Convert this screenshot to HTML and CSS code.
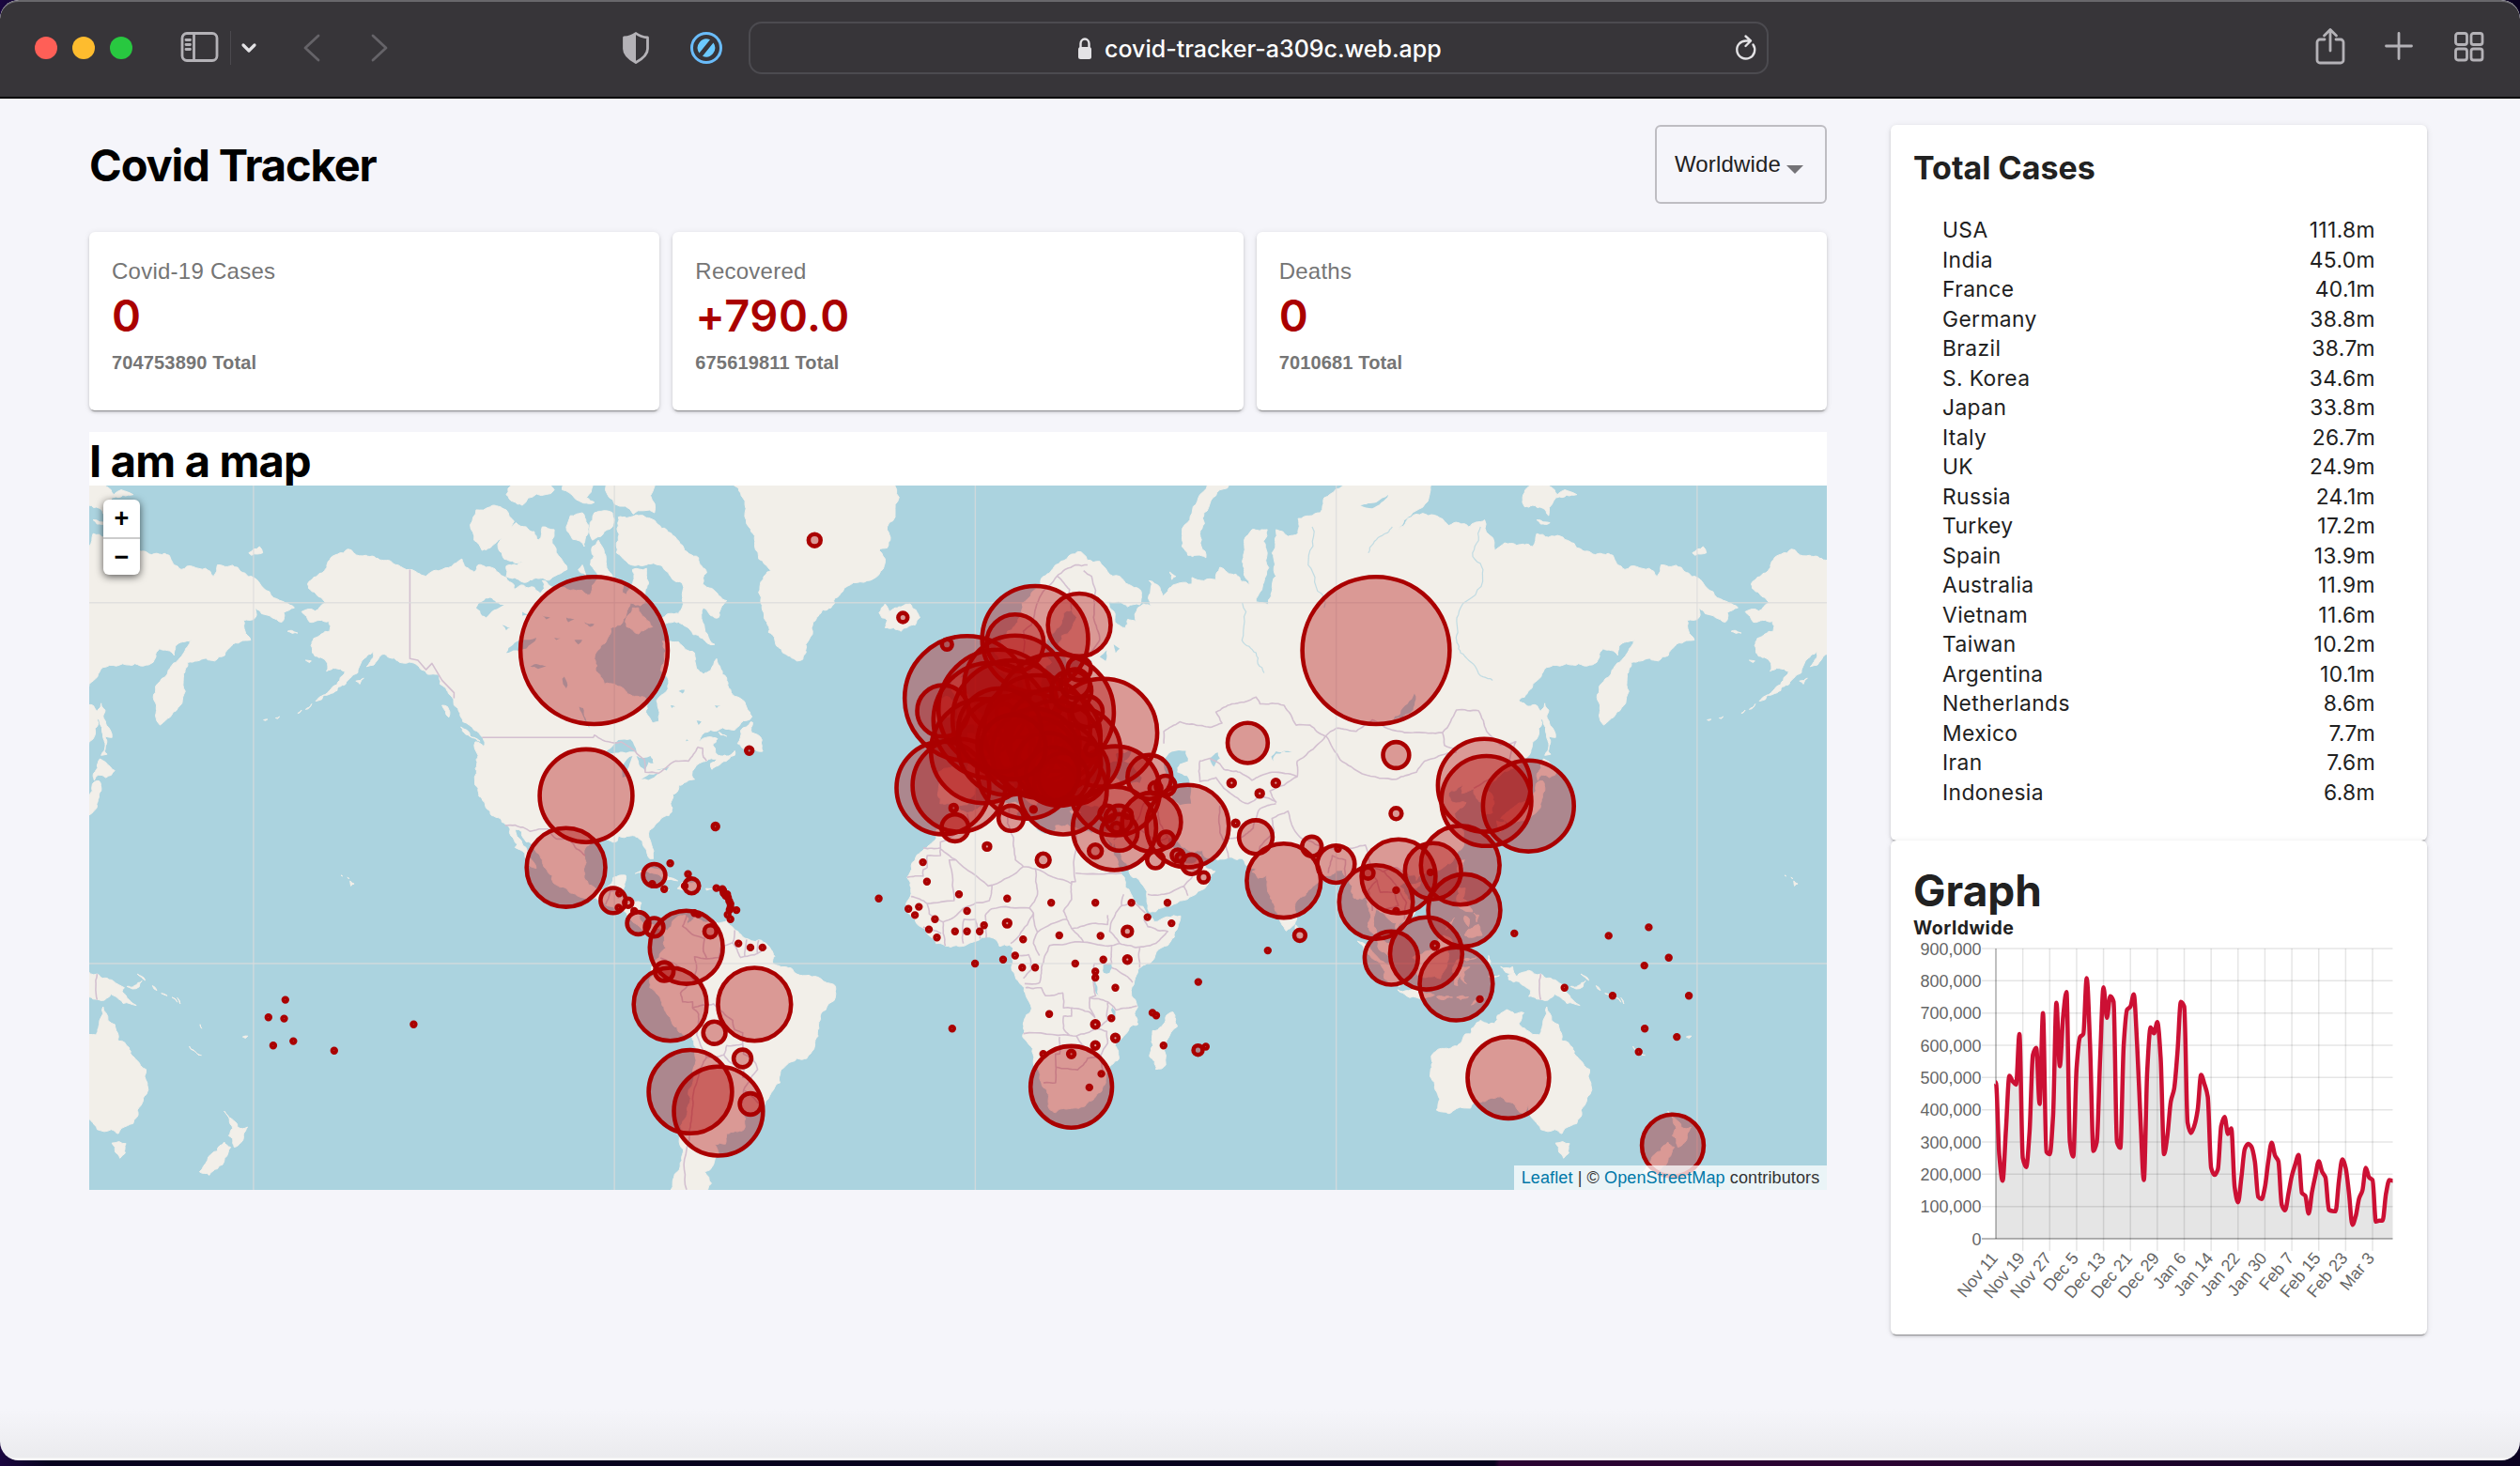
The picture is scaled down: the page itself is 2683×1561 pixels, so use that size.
FILE: index.html
```html
<!DOCTYPE html>
<html lang="en">
<head>
<meta charset="utf-8">
<title>Covid Tracker</title>
<link rel="stylesheet" href="styles.css">
</head>
<body>
<div class="window">
  <header class="toolbar">
    <div class="lights"><i class="light red"></i><i class="light amber"></i><i class="light green"></i></div>
    <svg class="icon sidebar-icon" viewBox="0 0 42 36"><rect x="2" y="2.500" width="37" height="29" rx="5"/><path d="M14.500 3v28M6 9.500h4.500M6 14.500h4.500M6 19.500h4.500"/></svg>
    <i class="divider"></i>
    <svg class="icon bright chevron-icon" viewBox="0 0 18 12"><path d="M3 3l6 6 6-6"/></svg>
    <svg class="icon dim back-icon" viewBox="0 0 18 32"><path d="M16 3L2 16l14 13"/></svg>
    <svg class="icon dim forward-icon" viewBox="0 0 18 32"><path d="M2 3l14 13L2 29"/></svg>
    <svg class="icon shield-icon" viewBox="0 0 30 36"><path d="M15 2.500C11 5.500 7 6.500 2.500 7v12c0 7 6 11 12.500 14.500C21.500 30 27.500 26 27.500 19V7C23 6.500 19 5.500 15 2.500z"/><path class="solid" d="M15 2.500C11 5.500 7 6.500 2.500 7v12c0 7 6 11 12.500 14.500z"/></svg>
    <svg class="icon blocker-icon" viewBox="0 0 36 36"><circle cx="18" cy="18" r="15.500"/><path class="solid" d="M10.500 23.500A9.500 9.500 0 0 1 22 9.300zM25.500 12.500A9.500 9.500 0 0 1 14 26.700z"/></svg>
    <div class="address">
      <svg class="lock-icon" viewBox="0 0 18 26"><path class="shackle" d="M4.500 12V7.500a4.500 5 0 0 1 9 0V12"/><rect x="2" y="11" width="14" height="13" rx="2.500"/></svg>
      <span class="url">covid-tracker-a309c.web.app</span>
      <svg class="icon bright reload-icon" viewBox="0 0 26 30"><path d="M20.500 11.500A9.500 9.500 0 1 1 13 7.500h4M12.500 2.500l5.500 5-5.500 5.500"/></svg>
    </div>
    <svg class="icon share-icon" viewBox="0 0 32 42"><path d="M10 14H5a3 3 0 0 0-3 3v19a3 3 0 0 0 3 3h22a3 3 0 0 0 3-3V17a3 3 0 0 0-3-3h-5M16 26V4M9.500 10L16 3.500 22.500 10"/></svg>
    <svg class="icon plus-icon" viewBox="0 0 30 30"><path d="M15 1.500v27M1.500 15h27"/></svg>
    <svg class="icon grid-icon" viewBox="0 0 34 34"><rect x="2.500" y="2.500" width="12" height="12" rx="2.500"/><rect x="19" y="2.500" width="12" height="12" rx="2.500"/><rect x="2.500" y="19" width="12" height="12" rx="2.500"/><rect x="19" y="19" width="12" height="12" rx="2.500"/></svg>
  </header>

  <main class="app">
    <section class="left">
      <div class="app-header">
        <h1 class="title">Covid Tracker</h1>
        <div class="select"><span>Worldwide</span><i class="caret"></i></div>
      </div>
      <div class="stats">
        <article class="card stat"><p class="stat-label">Covid-19 Cases</p><h2 class="stat-value">0</h2><p class="stat-total">704753890 Total</p></article>
        <article class="card stat"><p class="stat-label">Recovered</p><h2 class="stat-value">+790.0</h2><p class="stat-total">675619811 Total</p></article>
        <article class="card stat"><p class="stat-label">Deaths</p><h2 class="stat-value">0</h2><p class="stat-total">7010681 Total</p></article>
      </div>
      <div class="map-panel">
        <h1 class="title map-title">I am a map</h1>
        <div class="map">
          <svg class="map-canvas" id="map" viewBox="0 0 1850 750" width="1850" height="750"></svg>
          <div class="zoom-control"><b>+</b><b>−</b></div>
          <div class="attribution"><a>Leaflet</a> | © <a>OpenStreetMap</a> contributors</div>
        </div>
      </div>
    </section>

    <aside class="right">
      <div class="card totals">
        <h3 class="totals-title">Total Cases</h3>
        <ul class="table">
          <li><span>USA</span><span>111.8m</span></li>
          <li><span>India</span><span>45.0m</span></li>
          <li><span>France</span><span>40.1m</span></li>
          <li><span>Germany</span><span>38.8m</span></li>
          <li><span>Brazil</span><span>38.7m</span></li>
          <li><span>S. Korea</span><span>34.6m</span></li>
          <li><span>Japan</span><span>33.8m</span></li>
          <li><span>Italy</span><span>26.7m</span></li>
          <li><span>UK</span><span>24.9m</span></li>
          <li><span>Russia</span><span>24.1m</span></li>
          <li><span>Turkey</span><span>17.2m</span></li>
          <li><span>Spain</span><span>13.9m</span></li>
          <li><span>Australia</span><span>11.9m</span></li>
          <li><span>Vietnam</span><span>11.6m</span></li>
          <li><span>Taiwan</span><span>10.2m</span></li>
          <li><span>Argentina</span><span>10.1m</span></li>
          <li><span>Netherlands</span><span>8.6m</span></li>
          <li><span>Mexico</span><span>7.7m</span></li>
          <li><span>Iran</span><span>7.6m</span></li>
          <li><span>Indonesia</span><span>6.8m</span></li>
        </ul>
      </div>
      <div class="card graph">
        <h1 class="graph-title">Graph</h1>
        <h4 class="graph-sub">Worldwide</h4>
        <svg class="chart" id="chart" viewBox="0 0 523 390" width="523" height="390"></svg>
      </div>
    </aside>
  </main>
</div>
<script src="script.js"></script>
</body>
</html>
```

FILE: styles.css
```css
* { box-sizing: border-box; margin: 0; padding: 0; }
body {
  width: 2683px; height: 1561px; overflow: hidden;
  background: linear-gradient(90deg, #1a0640 0, #08031f 2%, #08031f 59.3%, #2b0433 59.5%, #2b0433 75%, #0a0220 100%);
  font-family: Inter, "Liberation Sans", sans-serif;
}
.window {
  height: 1555px; border-radius: 20px; overflow: hidden;
  background: linear-gradient(#f5f5fa 0, #f5f5fa 1500px, #ebebee 1552px, #fafafa 1553px);
}

/* Browser toolbar */
.toolbar {
  height: 105px; display: flex; align-items: center; padding: 0 36px 4px 37px;
  background: #373539; border-top: 2px solid #69686c; border-bottom: 2px solid #000;
  border-radius: 20px 20px 0 0;
}
.toolbar > * { flex: none; }
.lights { display: flex; gap: 16px; width: 104px; }
.light { width: 24px; height: 24px; border-radius: 50%; }
.red { background: #ff5f57; }
.amber { background: #febc2e; }
.green { background: #28c840; }
.icon { fill: none; stroke: #b4b2b7; stroke-width: 2.8; stroke-linecap: round; stroke-linejoin: round; }
.icon .solid { fill: #b4b2b7; stroke: none; }
.icon.bright { stroke: #e3e2e5; }
.icon.dim { stroke: #656368; }
.sidebar-icon { width: 42px; height: 36px; margin-left: 51px; }
.divider { width: 1px; height: 36px; background: #4c4a4f; margin-left: 11px; }
.chevron-icon { width: 18px; height: 12px; margin-left: 10px; stroke-width: 3.2; }
.back-icon { width: 18px; height: 32px; margin-left: 49px; }
.forward-icon { width: 18px; height: 32px; margin-left: 54px; }
.shield-icon { width: 30px; height: 36px; margin-left: 249px; }
.blocker-icon { width: 36px; height: 36px; margin-left: 42px; stroke: #6abcfa; stroke-width: 3; }
.blocker-icon .solid { fill: #6ccaff; }
.address {
  display: flex; align-items: center; width: 1086px; height: 56px; margin-left: 27px;
  border: 2px solid #4c4b50; border-radius: 14px; padding: 0 9px 0 347px;
}
.lock-icon { width: 18px; height: 26px; fill: #e3e2e5; margin-top: 2px; }
.shackle { fill: none; stroke: #e3e2e5; stroke-width: 2.4; }
.url { flex: 1; margin: 2px 0 0 12px; color: #fff; font-size: 25px; letter-spacing: 0; font-weight: 500; }
.reload-icon { width: 26px; height: 30px; stroke-width: 2.4; }
.share-icon { width: 32px; height: 42px; margin-left: 582px; margin-top: -3px; }
.plus-icon { width: 30px; height: 30px; margin-left: 42px; margin-top: -3px; }
.grid-icon { width: 34px; height: 34px; margin-left: 43px; margin-top: -2px; }

/* Page */
.app { display: flex; justify-content: space-between; padding: 28px 99px 0 95px; }
.left { width: 1850px; }
.right { width: 571px; }
.card {
  background: #fff; border-radius: 6px;
  box-shadow: 0 3px 1px -2px rgba(0,0,0,.3), 0 2px 3px rgba(0,0,0,.14), 0 1px 6px rgba(0,0,0,.1);
}
.app-header { display: flex; justify-content: space-between; align-items: center; height: 84px; margin-bottom: 30px; }
.title { font-size: 47px; line-height: 56px; font-weight: 700; letter-spacing: -1.1px; color: #000; padding-top: 2px; }
.select {
  width: 183px; height: 84px; border: 2px solid #bebdc2; border-radius: 6px;
  display: flex; align-items: center; padding: 0 23px 0 19px; justify-content: space-between;
  font: 24px "Liberation Sans", sans-serif; color: #212121; letter-spacing: .15px;
}
.caret { border: 9px solid transparent; border-top-color: #747377; border-bottom: 0; margin-top: 11px; }
.stats { display: grid; grid-template-columns: repeat(3, 1fr); gap: 14px; height: 190px; margin-bottom: 23px; }
.stat { padding: 25px 24px; }
.stat-label { font: 24px/34px "Liberation Sans", sans-serif; letter-spacing: .25px; color: #757575; }
.stat-value { font-size: 47px; line-height: 56px; font-weight: 600; letter-spacing: .5px; color: #aa0000; margin-top: 2px; }
.stat-total { font: bold 20px/28px "Liberation Sans", sans-serif; letter-spacing: .15px; color: #757575; margin-top: 8px; }
.map-panel { background: #fff; height: 807px; }
.map-title { height: 57px; padding-top: 3px; letter-spacing: -.8px; }
.map { position: relative; width: 1850px; height: 750px; overflow: hidden; background: #abd3df; }
.map-canvas { display: block; }
.land { fill: #f2efe9; stroke: #f2efe9; stroke-width: 1; stroke-linejoin: round; }
.water { fill: #abd3df; }
.river { fill: none; stroke: #abd3df; stroke-width: 1.2; opacity: .7; }
.border { fill: none; stroke: #d3c0d0; stroke-width: 1.6; stroke-linejoin: round; }
.tile { stroke: #dcdcdc; stroke-width: 1.4; opacity: .75; }
.case { fill: #ae0000; fill-opacity: .36; stroke: #aa0000; stroke-width: 4.6; }
.zoom-control {
  position: absolute; left: 15px; top: 15px; width: 39px; background: #fff; border-radius: 6px;
  box-shadow: 0 2px 8px rgba(0,0,0,.65);
}
.zoom-control b { display: block; height: 40px; text-align: center; font: bold 27px/41px "Liberation Sans", sans-serif; color: #000; }
.zoom-control b + b { border-top: 2px solid #ccc; line-height: 39px; }
.attribution {
  position: absolute; right: 0; bottom: 0; height: 26px; width: 333px; text-align: center;
  background: rgba(255,255,255,.75); font: 18px/27px "Liberation Sans", sans-serif; letter-spacing: .12px; color: #333;
}
.attribution a { color: #0078a8; }

.totals { height: 762px; padding: 25px 55px 0 24px; }
.totals-title { font-size: 34px; line-height: 42px; font-weight: 700; color: #212121; }
.table { list-style: none; margin: 29px 0 0 31px; color: #212121; font-size: 22.8px; letter-spacing: .4px; }
.table li { display: flex; justify-content: space-between; height: 31.5px; line-height: 31.5px; }
.graph { height: 526px; padding: 25px 24px 0; }
.graph-title { font-size: 46px; line-height: 56px; color: #212121; }
.graph-sub { font-size: 19.5px; line-height: 25px; color: #212121; letter-spacing: .5px; }
.chart { display: block; }
.grid { stroke: rgba(0,0,0,.1); stroke-width: 1.5; }
.axis { stroke: rgba(0,0,0,.28); stroke-width: 1.8; }
.area { fill: rgba(0,0,0,.1); }
.series { fill: none; stroke: #cc1034; stroke-width: 4.5; stroke-linejoin: round; }
.tick { font: 18px "Liberation Sans", sans-serif; fill: #666; text-anchor: end; }
```

FILE: script.js
```js
const NS = 'http://www.w3.org/2000/svg';
function add(parent, tag, attrs, text) {
  const el = document.createElementNS(NS, tag);
  for (const key in attrs) el.setAttribute(key, attrs[key]);
  if (text !== undefined) el.textContent = text;
  parent.appendChild(el);
  return el;
}

/* Map: Web Mercator */
const WORLD = 1537, X0 = 943.4, Y0 = 509, K = WORLD / (2 * Math.PI), RAD = Math.PI / 180;
const px = lon => X0 + lon * WORLD / 360;
const py = lat => Y0 - K * Math.log(Math.tan(Math.PI / 4 + lat * RAD / 2));

const land = [
  // Americas
  '-156.5,71.3 -155,71 -152,70.8 -148,70.4 -144,70 -141,69.6 -137,69 -135,69.5 -133,69.6 -130,70.1 -128,70.5 -127,69.8 -125,69.4 -124,70 -122,69.8 -117,68.9 -115,68.2 -115,67.8 -110,68 -108.5,67.4 -107.5,67.9 -108,68.6 -104,68 -101,67.7 -98,67.7 -96,67.3 -95.5,68.2 -94,69 -96,70 -95.5,71.5 -94,72 -92.5,71 -92,70 -91.5,69.5 -90,68.8 -88,68.5 -88,67.5 -87,67.3 -86,68 -85.5,69.6 -82,69.7 -81.5,68.5 -82,67 -83.5,66.2 -86,66.5 -87,65.4 -88.5,64.2 -91,63.8 -93,62 -94.7,60 -94.7,58.8 -92.5,57 -90,57 -88,56.5 -85,55.3 -82.3,55.1 -82.2,53 -80.5,51.3 -79,51.5 -78.8,53 -79.5,54.7 -77,56 -76.5,57.5 -78.5,58.8 -77.5,60 -78,62.4 -74,62.3 -70,61 -69.5,59 -67.8,58.3 -66,58.8 -64.5,60.3 -63.5,59 -62,57.8 -61.5,56.5 -60,55.3 -57.5,54.5 -57,53.7 -55.7,52.3 -58.5,51.3 -60,50.2 -66,50.2 -68.5,49 -70,47 -69,48.1 -66.5,49.1 -64.3,48.8 -65.5,47.8 -64.8,46.5 -63.5,45.9 -61.5,45.9 -60,46.8 -60,46 -63.5,44.5 -65.7,43.5 -66,44.6 -64.5,45.4 -67,45 -70,43.7 -70.7,42.5 -70,41.7 -72,41.2 -74,40.6 -74.8,39 -75.5,38.8 -76,37 -75.7,35.3 -77.5,34.4 -79.5,33 -81.3,31.5 -81.4,30 -80.2,27 -80.3,25.3 -81.2,25.3 -81.8,26.3 -82.7,28 -83,29.2 -84.2,30 -86,30.3 -89,30.3 -89.3,29.2 -91.5,29.4 -94,29.6 -97,28 -97.5,26 -97.7,22.8 -96.3,19.2 -94.5,18.2 -92,18.6 -90.6,19.7 -90.3,21 -87.2,21.5 -87.5,19.5 -88.3,17.5 -88.8,15.9 -86,15.9 -83.3,15 -83.6,12.5 -83.7,11 -82,9 -79.8,9.5 -77.5,8.6 -76.8,8.2 -75.5,10.6 -74.8,11.1 -72.3,12 -71.5,11.2 -71.8,9.5 -71,10.4 -70,12 -68.3,10.7 -66,10.5 -62,10.7 -60.8,9.3 -60,8.4 -58.5,7.3 -57.5,6.3 -54,5.9 -51.8,4.6 -51,3.5 -50,1.8 -50.5,0 -48.5,-0.8 -46,-1.1 -44.5,-2.6 -41.5,-2.9 -38.5,-3.8 -37,-4.8 -35.3,-5.2 -34.8,-7.5 -35.2,-9.2 -37.3,-11.5 -38.7,-13 -39,-16 -39.2,-17.8 -40,-20 -40.8,-21.5 -42,-23 -44.5,-23 -47,-24.5 -48.6,-26 -48.7,-28.5 -50.3,-30 -52.3,-32.5 -53.7,-34.2 -55,-34.9 -58,-34.2 -57.3,-36 -57.7,-38.2 -62,-39 -62.3,-41 -65,-41 -64,-42.7 -65.3,-44.8 -67.5,-46 -65.8,-48 -67.5,-50 -69,-52 -74.5,-52 -75.5,-48 -74.3,-46 -73.2,-44 -72.8,-42 -73.8,-40 -73.5,-37.5 -71.7,-33.5 -71.5,-30 -70.5,-26 -70.2,-19 -71.5,-17.5 -75.5,-15 -77.2,-12 -79.5,-7.5 -81.2,-6 -81.3,-4.5 -80,-3 -80.8,-2 -80,0.2 -78.8,1.5 -77.2,3.8 -77.5,6.5 -78.2,8 -79.5,8.9 -80.3,8 -81.8,7.8 -83,8.3 -84.8,9.9 -85.8,10.8 -87.6,13 -90,13.8 -92.3,14.6 -94.7,16.2 -97,15.9 -101.5,17.8 -105.3,19.8 -105.5,21.5 -108,25 -109.5,26.7 -112,29 -113.1,31.2 -114.8,31.7 -114.3,30.2 -112.8,28.2 -111.3,26 -110,24.3 -109.5,23.1 -110.3,23.3 -112,25 -112.3,26.5 -114.8,27.8 -114.2,28.5 -115.8,30.3 -117.2,32.8 -118.5,34 -120.6,34.6 -122.4,37.3 -124,40 -124.4,42.8 -124,46 -124.7,48.3 -122.5,47.5 -122.8,49 -125,50.2 -127.8,51.5 -128.5,52.8 -130,54 -131,55.5 -133.5,57 -134,58.3 -136.5,58.3 -139.5,59.6 -144,60 -148,60.8 -150,59.5 -151.8,59.3 -150,61.2 -153,60 -154,58.5 -157,57 -160,55.8 -164.5,54.6 -162,55.6 -158.5,57.5 -157.2,58.7 -161.8,58.7 -162,60 -165.3,61 -165,62.7 -161,63.5 -161.2,64.6 -166,64.5 -168,65.6 -162,66.5 -163.8,67.1 -166.5,68.3 -163,69.3 -161,70.4 -159,70.9',
  '-117,69 -113,68.5 -109,68.8 -105,69 -101.8,69.6 -104,70.8 -105,72.8 -108,73 -109,72 -112,73 -114.5,73.3 -118,72.4 -119,71.4 -117.5,70.5 -112,70.4 -117,69.9',
  '-125,72 -123,71.2 -121,71.4 -119,72 -115,73.4 -117,74.2 -121,74.4 -124.5,74.2',
  '-97,69 -95.5,68.8 -99,69.6 -98,70',
  '-102,73 -97.5,71.5 -96.5,73 -98,74 -101,73.8', '-95.5,72 -90.5,73 -90.5,74 -95,74',
  '-89,73.7 -85,73.8 -81,73.6 -77,72.8 -73,71.6 -69,70.6 -67,69.3 -68,68.3 -64,67.2 -62,66.7 -64,65 -66,65.2 -67.8,66 -68,64.5 -65,62 -68,62.7 -72,64 -74,64.5 -78,64.3 -78,65 -74,65.4 -73,67 -73,68.3 -76,69 -79,70 -84,70 -87,70.3 -89.5,71 -89,72',
  '-87,64 -85.5,66 -84,66 -80.5,64 -84,63.2', '-80,74 -90,74.6 -92,76.5 -80,76.2', '-93,76.4 -97,75 -95,74.7 -100,75 -103,75.5 -101,76.8 -96,77', '-105,75.5 -113,74.5 -117,75.2 -114,76.6 -108,76.8', '-117,76.1 -123,76.1 -120,77 -116,77',
  '-59.3,48 -56,51.5 -55.5,51.4 -55.8,49.8 -53.2,48.6 -53,46.7 -55.5,47', '-64,49.9 -62,49.2 -63.5,49.4', '-128.3,50.7 -125,49 -123.5,48.4 -126,49.2', '-133,54 -131.6,53.8 -131.3,52.2', '-154.5,57.4 -152.5,57.8 -153.5,57', '-167,53.4 -165.5,54.2 -166,53.7', '-169,52.8 -168,53.3 -168.5,52.9', '-174.5,52.1 -173.5,52.3 -174,52', '-177.5,51.8 -176.5,51.9 -177,51.7', '-170.5,63.6 -169,63.3 -171.5,63.5', '-167,60.1 -165.6,60 -166,59.8',
  '-84.8,21.9 -82.5,23.1 -80,23 -77,21.5 -74.2,20.2 -77.6,19.9 -78.5,21.3 -82,22.5', '-74.3,18.4 -73,19.9 -70,19.8 -68.4,18.6 -71,17.8 -72.5,18.2', '-78.3,18.4 -76.3,18.1 -77.5,17.8', '-67.2,18.4 -65.7,18.3 -67,18', '-155.9,20.2 -154.9,19.5 -155.7,19', '-156.6,21 -156.1,20.7', '-158.2,21.5 -157.8,21.3', '-58,-51.3 -61,-52',
  // Greenland, Iceland, Britain, Arctic
  '-73,78.5 -69,76 -66,76 -61,76 -58,75 -56.5,73 -55,71.5 -54,70.5 -51,69.5 -53.5,68.5 -53.5,66.5 -52,64.5 -50,62.5 -48,61 -44.5,60 -43,60.2 -42.3,62 -40.5,64.5 -38,65.8 -36,66 -33,67.6 -27,68.6 -22.5,70.2 -24,71.2 -22,71.4 -22,73 -20,74 -20,76 -18,78.5',
  '-24,65.5 -22.5,66.4 -21.5,65.6 -20,66 -16.3,66.4 -13.8,65 -15,64.2 -18.5,63.5 -22.5,63.9 -22,64.7',
  '-5.5,50.1 -3,50.7 1,51 1.6,52.7 0,53.3 -1.5,55 -3,56 -2,57.6 -4,57.8 -3.2,58.6 -5,58.5 -6,56.5 -4.8,54.8 -3,54 -4.5,53.2 -4.5,52.2 -5,51.7 -3,51.4', '-10,51.7 -6.3,52.2 -5.6,54.6 -7.5,55.3 -10,54.2',
  '51.5,71.5 53,70.8 57.5,70.6 56,72.5 57,74 61,75.5 67,76.5 68,76.9 63,76.4 56,75.2 53.5,73.5', '48.5,69.4 50,69 49,68.7', '94,80 100,79 105,78.5 103,77.7 97,78', '137.5,75.6 140,75.9 143,75.8 145,75 150,75.2 147,75.5 143,73.8 139,74.5 137,74.4', '140,73.5 143.3,73.3 141,73.2', '178.8,71 181.5,71.5 182.3,71 179.5,70.8',
  // Eurasia
  '25.5,71.1 31,70.3 33,69.4 36,69 41,67.8 41,66.3 38,66.1 33,66.6 34.8,64.5 37.5,63.9 38,64.8 40,64.6 40.5,66 42,66.4 44,66.1 44,68.3 43.3,68.6 46,68 46.5,66.8 48,67.6 51,68.4 54,68.3 54,68.9 57,68.6 60,68.7 61,69.8 65,69.2 68.5,68.2 67,69.5 67,71 69,72.8 72.8,72.8 72.8,71 72,68.5 70,66.6 73,66.3 74,68 75,69 74,71 75,72.8 78,72.3 80.5,72.5 80.5,73.6 86,74 87,75 93,76 98,76.2 104,77.6 112,76.5 113.5,75.5 109,74 105.5,72.8 110,73.9 113,73.8 118,73.1 123,73 127,73.5 129.5,71.2 132,71.8 135,71.6 139,71.5 140,72.5 146,72.3 150,71.4 154,70.9 159,70.8 162,69.6 168,69.7 170,69 171,70 176,69.8 180,68.9 185,67 188,66.5 190.2,66 187.5,65.5 187,64.5 182,65.4 180.5,66 180.5,65 177.5,64.7 179.3,62.5 174.5,61.8 170.3,60 166,60 163.5,59.8 162.5,57.8 163,56 160,53 158,51.7 156.7,51 155.8,54 156,57 158.5,58.3 161,60 163.5,61.7 164.5,62.5 160.5,61.8 160.2,60.7 156.5,61.5 154.5,59.7 149,59.5 142.5,59.2 139,57 137,55.2 135.5,54.7 139.5,54.1 141.3,53 140.5,49.5 138.5,46.5 136,44.5 132,43.2 129.8,41.5 127.5,39.8 129.4,37 129,35.2 126.5,34.5 126.5,37.2 125,38 124.5,40 121.3,39 121.5,40.8 118,39 119,37.3 122.4,37.2 119.5,35 121,32.5 121.8,31 121.8,29 119.7,26 117,23.5 113.5,22.2 110.5,21.2 110,20.3 109.6,21.6 107.8,21.5 105.8,19 108.8,15.5 109.3,12 107,10.4 104.8,8.7 105,10.2 103,11 101,12.7 100,13.4 99.3,11 99.3,9.3 100.5,7.3 103.2,5 103.5,2.5 104,1.4 101.3,3 100.3,5.8 98.3,8.2 98.6,12 97.6,16.3 95.3,15.8 94.3,16.2 94,19 92,21.5 91.5,22.7 89,21.7 87,21.3 85,19.5 82.3,16.7 80.2,15.5 80,12.5 79.8,10.3 78,8.5 77.5,8.1 76.3,10 74.8,13 73.3,17 72.8,20 72.6,21.5 70.5,20.8 69,22.3 70,23 67.5,23.8 66.6,25.3 61.6,25.2 57.2,25.7 56.7,27.1 54,26.6 51.5,27.9 50,30.1 48,30 48.5,28.3 50.2,26.5 51,24.6 51.3,26 51.6,24.5 54,24.1 56.2,26.2 56.6,24.5 59.8,22.4 57.7,19 55,17 52,15.6 45,12.8 43.4,12.7 42.8,16 39.2,21 37.2,24.5 35,28 34.8,29.5 34.3,31.2 35.2,33 36,36 36.1,36.8 34,36.3 32.3,36.1 30.5,36.6 27.5,36.8 26.3,38.5 26.2,39.5 27,40.4 29,41 26,40.8 23.8,40.5 22.8,40.3 23.8,39 24,37.8 22.8,36.6 21.7,37 20,39.5 19.4,41.5 16.5,43.3 14,45 13.7,45.6 12.4,45.2 12.5,44 14,42.5 16,41.5 18.4,40 17,40.5 17,39 16,38 15.7,40 13,41.2 10.5,42.9 8.8,44.4 6,43.1 3.2,43.3 3.2,42 0.5,40.7 -0.2,38.8 -2,36.8 -5.5,36.1 -6.5,37 -8.8,37 -9.4,38.8 -8.8,41.5 -9.2,43 -7.8,43.7 -1.8,43.4 -1.2,45.8 -2.5,47.3 -4.7,48.1 -1.5,48.7 -1.8,49.7 0.2,49.5 1.6,50.8 4,51.8 5,53.3 8.5,53.8 8.2,56 8.3,57 10.5,57.7 10.3,56 9.8,54.8 11,54 14,54 18.5,54.7 21,55.2 21.3,57.3 23.5,57.1 24.3,58.2 23.5,59.2 28,59.5 30,60 25,60.2 22.8,59.9 21.3,61 21.5,63 25.3,65 24,65.8 22,65.4 21,64 17.3,61.5 17.3,60.7 19,59.8 16.5,57.5 16,56.3 14.3,55.5 12.8,55.6 11.2,58.9 10.5,59.5 8,58 5.5,59 5,61.5 8,63.5 11,65 14,67.5 17,69 20,70',
  // Africa
  '-6,35.8 -2,35.1 3,36.8 10,37.3 11,36.8 10.2,34.3 15,32.4 19,30.3 20,32.5 23,32.7 29,30.9 32.5,31.2 34.3,31.3 34.8,29.5 34.3,28 32.6,29.9 33.5,28 35.5,24 37.2,21 37.4,18.8 39.5,15.5 43.2,11.8 44.5,10.4 51.2,11.8 50.5,9 48,4.5 43.5,0 40.2,-2.8 39,-6 40.5,-10.8 40.6,-15 37,-17.8 34.8,-20 35.5,-23.5 32.8,-26 32.5,-28.5 30,-31.5 27,-33.6 22,-34 20,-34.8 18.4,-34 18.2,-32 16.5,-28.6 14.8,-25 14.4,-22 11.8,-18 12,-16 13.7,-12 13,-8.8 12.2,-6 9,-1 9.5,3.8 8.5,4.6 6,4.3 4.5,6.3 1,5.9 -2,4.8 -7.5,4.4 -11.3,6.8 -13.3,9 -15,11 -16.8,12.5 -17.3,14.7 -16.2,16.5 -16.3,19.2 -17,21 -16,23.7 -14.5,26.2 -11.5,28.3 -9.7,29.7 -9.8,31.5 -6.8,34.1',
  '49.3,-12 50.4,-15.5 49.6,-16 47.5,-24.5 45,-25.5 43.4,-22.5 44.3,-20 44.2,-16.5 46.5,-15.5',
  // Mediterranean islands
  '12.5,38 15.6,38.2 15.1,36.7', '8.2,40.8 9.7,40.8 9.4,39.2 8.4,39', '8.7,42.4 9.4,43 9.3,41.5', '23.6,35.5 26.3,35.2 24,35', '32.4,34.9 34.5,35.6 33,34.6', '2.4,39.5 3.4,39.7 3,39.3',
  // Asia and Oceania islands
  '142,54.3 143,53.3 143.3,51 144.7,49 143,49.2 142.8,46.8 143.5,46.2 142,46 142.2,50', '140,42.3 141.7,45.4 144.3,44 145.4,43.3 143.2,42 141.2,42.5 140.3,41.5', '141.5,41.4 142,39.5 140.8,36 139,34.7 135.8,33.5 131,34 133,35.5 136.7,37.3 139.8,39.5 140.3,41.2', '130,33.5 132,33.4 131,31.2 130.2,31.4', '132.3,33.8 134.6,34.2 133,32.8', '121,25 122,25 120.8,22 120.1,23', '108.7,19.3 111,19.9 110,18.4', '79.9,9.6 81.8,7.5 81,6 79.8,7',
  '95.3,5.6 98,4.5 103.5,-0.5 106,-3.2 105.8,-5.8 102,-3.8 98.7,1.5', '105.3,-6.5 108,-6.7 111,-6.4 114.5,-7.8 113,-8.3 107,-7.6', '109,1.5 109.7,2 113,3.2 116.8,7 119,5.2 117.7,3 118,1 116,-3.8 113,-3.3 110.2,-2.8', '119.3,-3 120,0.8 125,1.5 121,0.5 121,-1 123.3,-0.8 121.8,-2 122.5,-5 121,-3 120.3,-5.5 119.5,-5.3', '120,16 120.5,18.5 122.2,18.5 121.5,16 124,12.8 120.7,13.8', '122,7 123.5,8.6 125.5,9.7 126.4,7 124,6.5', '122,11.8 123.2,11 123,9.2 122,10.5', '124.3,12.5 125.6,12 125,10.3', '117.3,8.4 119.5,11.3 118.5,9.3', '115,-8.3 117,-8.3 119,-8.4 116.5,-9', '120,-8.4 123,-8.3 121,-9', '123.7,-10.3 127,-8.4 125,-9.4', '127.7,0 128,2 128.5,0.5 128,-0.8', '128,-3.2 130.7,-3 129,-3.5',
  '131,-0.8 134,-0.8 135,-3.3 138,-1.7 141,-2.6 145,-4.3 147.8,-6 147.2,-7 149,-9 150.8,-10.4 147.5,-9.9 144.5,-7.6 142,-9.2 138,-8.2 138.5,-6.8 135.5,-4.5 133,-4 132.8,-3 134,-2.6 132.3,-2.2', '148.4,-5.7 150.3,-5.5 152.2,-4.3 151.5,-5.8 149.8,-6.3', '151,-2.6 153,-4.2 152,-3.4', '154.8,-5.5 155.9,-6.7', '157,-7.4 158.5,-8', '159.7,-8.4 161,-9.6', '161,-8.5 161.7,-10', '164,-20.2 167,-22.3 166.2,-22.2', '177.3,-18 178.6,-17.8 178,-18.3', '166.7,-15 167.1,-16',
  '113.7,-22.5 114.2,-21.8 117,-20.7 121,-19.5 122.2,-17.3 123.5,-17.3 123.7,-16 125,-14.6 126,-14 128,-15 129.5,-14.8 130.2,-12.8 131,-12.3 132.5,-11.4 136.8,-12.2 135.5,-14.8 137,-15.9 139,-17.4 140.8,-17.5 141.6,-14 142.5,-10.7 143.7,-14 145.4,-15 146.3,-19 149,-20.5 151,-23.5 153.2,-25.5 153.5,-28.5 152.5,-32.3 151,-34.3 150,-37 147,-38 146.3,-39 144.5,-38.2 141,-38.2 139.5,-36.5 138.5,-35.6 138,-34.3 137.8,-32.7 137,-35 135.8,-34.8 134,-32.8 131,-31.5 128,-32 124,-33 123.5,-33.9 120,-34 118,-35 115,-34.3 115.8,-32 114,-28 113.5,-26 114,-24',
  '144.7,-40.8 148.2,-40.9 148,-42.7 146.7,-43.6 145.5,-42.5', '172.7,-34.5 174.5,-36 176,-37.7 178.5,-37.7 177.5,-39.3 176.5,-41 175.2,-41.6 174.8,-40 173.8,-39.4 174.8,-38 174,-36.2', '172.7,-40.6 174.3,-41.6 172.8,-43.6 171,-45.5 169,-46.6 166.5,-46 168.5,-44 171,-42.3'
];
const water = [
  '28,42 28.7,43.8 31,46.5 33,46 33.5,44.6 35.4,45 35,46.2 38.5,47.2 39,46.8 37,45 39.8,43.5 41.5,42 41,41 38,41 35,42 32,41.7 29.2,41.2',
  '47,45 49,46.6 52.5,46.8 53,45 51,44.5 50.3,43 52.8,42.3 53.8,39.5 53.8,37 51,36.7 49,37.8 49.5,40.3 47.5,43',
  '58.5,45.5 60.5,46.5 61,45.5 59.5,44', '73.8,45.8 75,46.7 79,46.7 75,46.3 74.3,45', '103.8,51.6 106,52.7 109.5,55.7 109.5,54 106.5,52.1', '32,0 34,0.3 33.5,-2.3 32,-2.3', '29.3,-3.5 31,-8.3 29.8,-6', '34,-10 35,-14 34.5,-13',
  '-92,46.7 -89,48.6 -86,48.7 -84.5,46.6 -88,46.6', '-88,42 -87.7,44.5 -85.5,45.9 -86.4,44 -86.5,42.3', '-84.5,45.9 -81,45.9 -80.3,44.6 -81.5,44.8 -82.3,43.2 -83.5,44', '-83.3,41.7 -79,42.8 -81.5,41.6', '-79.6,43.4 -76.3,44 -77,43.3', '-98.8,53.8 -97.8,53.6 -96.3,50.5 -97.5,52', '-124.5,66 -121,67 -117.5,66.3 -120,65.8 -122,65 -123,65.2', '-117,61 -113,62.5 -109.5,62.8 -112,61.5', '-111,59.3 -107,59.4 -109,59', '-103,57.7 -102,56.4 -102.5,58', '-100,62.5 -98,62.5 -99,62', '-97.5,64.5 -95,64.3 -96,64', '31,60.5 32.8,61.3 32.5,60', '34.5,62 36,61.5 35,61', '13,58.8 14,59 13.2,58.4', '96,74.5 100,74.7 103,75.2 99,74.3',
  '-118,64.2 -116,63.9 -117,63.6', '-108,65.2 -106,65 -107,64.8', '-102,65 -100,64.8 -101.5,64.5', '-113,65.6 -111.5,65.3 -113,65.2', '-105,62.8 -103.5,62.7 -104.5,62.5', '-74,56 -72.5,56.2 -73,55.7', '-76,54 -74.8,53.8 -75.7,53.6', '-65,54 -63.5,54 -64.5,53.6', '-69.5,51.7 -68.3,51.5 -69,51', '-72,48.7 -71.5,48.5 -72.2,48.4'
];
const rivers = ['126,73 124,71 126.5,69 121,66 120,63 121,61 125,59 129,57.5', '72,58.5 70,61 66.5,62.5 66.6,66.5', '84,73 83,70 87,67 87,66', '104,73 101,72.3 98,71'];
const borders = [
  '-141,69.6 -141,60.3 -139,60.1 -137,58.9 -135.5,59.7 -133,57.5 -130,55.8 -130,55', '-123,49 -95.2,49', '-95.2,49 -95,49.4 -93,48.6 -90,48.1 -88.4,48.3 -84.8,46.7 -82.5,45.3 -82.3,43 -79,42.8 -76.5,44.2 -74.8,45 -71.5,45 -70.3,46.2 -69.2,47.4 -68,47.2 -67.8,45.7 -67,45',
  '-117.2,32.5 -114.8,32.6 -111,31.3 -108,31.8 -106.5,31.8 -104.5,29.7 -102.5,29.7 -101,29.2 -99.5,27.5 -97.3,26',
  '-92.2,14.6 -91.5,16 -91,17.8 -89.2,17.8 -89,16', '-72,11.8 -73,9.3 -70,7 -67.5,6.2 -67.8,3 -67,1.2 -70,1.7 -69.5,-1 -70,-4.2 -73.5,-7.3 -73,-9.5 -70.5,-9.5 -70.5,-11 -69,-12.5 -69.5,-17.5 -68.5,-20 -67,-22.8 -69,-27 -70.5,-32 -71,-37 -72,-42 -72,-49',
  '-70,-4.2 -75,0 -78.5,1.4', '-67,1.2 -64,1.5 -63.5,4 -60.5,5.2 -60,8.3', '-60.5,5.2 -58.5,1.5 -55,2.2 -51.8,4', '-57,6 -57.5,2', '-54,5.8 -54.3,2.3', '-70.5,-11 -65.3,-10 -60.5,-14 -60,-16.3 -58,-17 -57.8,-22 -55.5,-23 -54.3,-25.5 -56,-27.5 -57.8,-30.2 -58.2,-33', '-67,-22.8 -62.7,-22.2 -61,-24 -57.7,-25.5 -58,-27.3 -56,-27.5', '-62.7,-22.2 -62,-20 -58,-19.7 -57.8,-22', '-57.5,-30.2 -53.5,-33.5',
  '-8.7,27.7 -8.7,29 -3,32 -1.5,32.2 -2,35', '-13,27.7 -8.7,27.7 -8.7,26 -12,26 -12,23.3 -13,22.8 -13,21.3 -17,21', '-8.7,27.5 -4.8,25 3.2,19 4.2,19.2 12,23.5 15,23 24,19.5 24,20 25,20 25,31.5', '25,22 36.5,22', '12,23.5 10,25 9.5,30 8,33 8.5,36.8', '-4.8,25 -6.5,25 -5.3,15.5 -12,14.8 -16,16.5', '4.2,19.2 3.5,15.5 0.2,15 -3,13.7 -5.3,11.5 -8,10.3 -11.5,12.3 -12,14.8', '15,23 15.5,17 13.5,13.7 4,13.5 2.5,12 2.7,6.4', '13.5,13.7 14.5,12.5 11,7 8.8,5', '24,19.5 24,15.8 22,13 22.8,11 15.5,7.8 14.5,12.5', '22.8,11 24,8.7 27,5.3 34,4.5 36,5 33.5,8 34,10.5 36.5,14.3 37,17', '24,8.7 30,10 33,9.7 33,12', '36.5,14.3 40,14.7 42.4,12.5', '36,5 40,4 42,4.2 45,5 48,8 43,9.2 42,11', '41,4 41,-1', '34,4.5 34,0 29.7,0 29.5,-4.5 30,-8 28.5,-8.5', '34,-1 37.5,-3 39.2,-4.7', '27,5.3 18.5,4.5 16.5,-1 16,-4.8 12.3,-5', '11,2 13.3,2.2 14,-1.5 12,-3.7', '15.5,7.8 14.5,5 16,2', '12.5,-6 16.5,-6 17.5,-8 21.8,-7.3 22,-11 24,-11 24,-13 22,-13 22,-16 23.5,-17.6 12,-17.2', '24,-11 28.5,-12 29.8,-13.3 28.5,-11 28.5,-8.5 33,-9.5 33,-14 30,-16 25.2,-17.8 23.5,-17.6', '25.2,-17.8 28,-21.5 31.3,-22.3 33,-19.5 32.8,-16.7 30,-16', '21,-18 21,-22 20,-22 20,-28.5 17,-28.5', '20,-25 23,-25.3 25.5,-25.6 28,-23 31.3,-22.3 32,-26.5', '33,-9.5 35,-11.5 40.3,-10.5', '-3,5 -2.8,11 0,11 1.2,6.2', '-8,10.3 -8,7.5 -7.5,4.4', '-13,9 -11,8.5 -8.5,7.5',
  '34.5,29.5 37,31.5 39,32.2 45,29.2 48,30', '39,32.2 41,34.5 42,37 45,37.2 46,33 48,30', '43,17 47,17 52,19 55,22.5 52,24', '52,19 53,16.7',
  '27,69.5 29,69 30,67.7 29.5,65 31,62.5 28,60.5', '20.5,69 23.5,67.8 24,65.8', '12,61 12,63.5 14,64.2 16,67 20.3,69 25,70 28,70',
  '47,48 47,50 51,51.5 55,51 59,50.7 61.5,51.3 60,53 64,54.2 70,55.2 71,54.2 77,54 80,51 83.5,51 87.3,49.2 90,50.5 95,50 99,51.8 102.3,50.6 107,49.8 113,49.7 116.5,49.8 117,47.7 120,47 119.8,46.5 116,46 112,45 110,43 105,41.7 96.5,42.7 91,45.2 87.5,49.2', '116.5,49.8 120,53.3 125.5,53.2 127.5,50 131,47.8 134.8,48.3 133,45 131,43', '87.3,49.2 83,46.5 80.3,45 80.3,42.2 74,43 71,42.3 69,41.5 66,43 62,43.5 61,44.5 58.5,45.5 56,45 56,41.3 60,42 62,40 66.5,37.4 68,37 71,38.5 75,37.3 73.5,39.5 80.3,42.2', '61,36.6 61,31 61.8,29.5 66.3,30 69.3,32 71,36 75,37', '63.2,25.3 61.8,29.5', '69,24 71,28 74.5,31 74,34 78,35.5 79,32.5 81,30 86,28 92,27.7 97.3,28.3 98.5,24 101.7,22.3 105,23.3 108,21.5', '88,22 89,26 92.3,25 92.3,21', '97.7,24 100.2,20.3 98,18 99,13', '100.2,20.3 101,17.5 104.5,17.5 105.5,14.3 102.5,13.5', '102,22.3 105,19 107.5,15 107,11', '124.3,40 129.7,42.3', '141,-2.6 141,-9'
];

/* [latitude, longitude, radius on screen] */
const cases = [
  [60,-95,78],[60,100,78],[38,-97,49],[23,-102,41.5],[21.5,-80,11.5],[24.25,-76],[21.75,-71.58],[19,-70.67,7.5],[18.25,-77.5],[19.5,-80.5],[19,-72.4],[15.5,-90.25,13],[17.25,-88.75],[13.83,-88.92],[15,-86.5,4],[13,-85],[10,-84,11.5],[9,-80,9.5],[4,-72,38.5],[8,-66,6],[12.5,-69.97],[12.17,-69],[-2,-77.5,9.5],[-10,-76,38.5],[-17,-65,11.5],[-30,-71,44],[-34,-64,47],[-23,-58,9],[-33,-56,11],[-10,-55,38.5],[5,-59],[4,-56],[4,-53],[32.33,-64.75,2.5],[46.8,-56.3,3],
  [18.5,-64.5],[18.25,-63],[17.9,-62.8],[17.3,-62.7],[17,-61.8],[16.7,-62.2],[16.25,-61.6],[15.4,-61.3],[14.7,-61],[13.9,-61],[13.25,-61.2],[13.2,-59.5],[12.1,-61.7],[11,-61],[72,-40,6],
  [-9,-172],[-13.3,-176.2],[-13.6,-172.3],[-20,-175],[-19,-170],[-21.2,-159.8],[-15,-140],
  [54,-2,66],[53,-8,27],[62,-7,5],[65,-18,4.5],[62,10,30],[62,15,56],[64,26,33],[56,10,54],[52.5,5.75,63],[51,9,62],[50.83,4,61],[52,20,62],[49,32,57],[46,25,48],[46,2,55],[40,-4,49],[39.5,-8,49],[42.83,12.83,52],[39,22,46],[39,35,47],[47,8,52],[47.33,13.33,54],[49.75,15.5,56],[48.67,19.5,50],[47,20,48],[44,21,44],[43,25,35],[45.17,15.5,42],[46,15,46],[56,24,21],[57,25,15],[59,26,12],[53,28,16],[47,29,6],[44,18,34],[41,20,22],[41.83,22,26],[42.5,19.3,28],[49.75,6.17,44],[47.14,9.55,34],[35.83,14.58,2],[36.13,-5.35,3],
  [42,43.5,23],[40,45,6],[40.5,47.5,10],[32,53,43.5],[33,44,31],[35,38,4],[31.5,34.75,44],[31,36,19],[33.83,35.83,14],[32,35.25,5],[35,33,8],[27,30,6.5],[29.5,47.66,8],[25,45,8.5],[26,50.55,6],[25.5,51.25,4],[24,54,10],[21,57,5],[25,17,6.5],[34,9,13],[28,3,3],[32,-5,14],
  [48,68,21],[46,105,13.5],[35,105,5.5],[40,127,49],[37,127.5,47.5],[36,138,48],[23.5,121,41.5],[22.3,114.2,29.5],[22.17,113.55],[21,105.6,39],[15,100,38.8],[13,122,38],[13,105],[18,105],[2.5,112.5,38],[1.37,103.8,28],[-5,120,38.5],[4.5,114.67,3],[-8.83,125.9],[24,90,19.5],[27.5,90.5],[28,84,10],[20,77,39],[22,98,5.5],[7,81,5.5],[30,70,17.5],[33,65,2.5],[41,64,3],[41,75,3],[39,71,3],[3.25,73],[-27,133,43],[-41,174,32.5],
  [7.5,134.5],[6.92,158],[9,168],[1.45,173],[-0.5,166.9],[-6,147],[-8,159],[-8,178],[-16,167],[-18,175],[-21.5,165.5],
  [24.5,-13],[20,-12],[17,-4],[16,8],[15,19],[15,30],[15,39],[15,48],[11.5,43],[10,49],[8,38,4.5],[1,38,3],[1,32],[-2,30],[-3.5,30],[-6,35],[0,25],[-1,15],[-1,11.75],[2,10],[1,7],[6,12],[10,8,3],[9.5,2.25],[8,1.17],[8,-2],[8,-5],[13,-2],[6.5,-9.5],[8.5,-11.5],[11,-10],[12,-15],[13.5,-16.6],[14,-14],[16,-24],[7,21],[6.9,31.3],[-12.5,18.5],[-15,30,3],[-13.5,34],[-18.25,35,3],[-20,30,3],[-22,24,3],[-22,17],[-26.5,31.5],[-29.5,28.5],[-29,24,43],[-20,47],[-20.28,57.55],[-21.1,55.6,4.5],[-12.17,44.25],[-12.83,45.17],[-4.58,55.67],[-16,-5.7],[0,0]
];

/* Midpoint displacement gives the coarse outlines an uneven edge; the seed keeps it the same on each load. */
let seed = 7;
const random = () => (seed = seed * 16807 % 2147483647) / 2147483647 - 0.5;
function roughen(points, rough, minLength) {
  for (let level = 0; level < 3; level++) {
    const out = [points[0]];
    for (let i = 1; i < points.length; i++) {
      const [ax, ay] = points[i - 1], [bx, by] = points[i];
      if (Math.hypot(bx - ax, by - ay) > minLength) {
        const k = random() * rough;
        out.push([(ax + bx) / 2 - (by - ay) * k, (ay + by) / 2 + (bx - ax) * k]);
      }
      out.push(points[i]);
    }
    points = out;
  }
  return points;
}
const toPath = (list, close, rough = 0) => list.map(s => {
  let points = s.split(' ').map(p => {
    const [lon, lat] = p.split(',').map(Number);
    return [px(lon), py(lat)];
  });
  if (close) points.push(points[0]);
  if (rough) points = roughen(points, rough, 4);
  return 'M' + points.map(p => p[0].toFixed(1) + ' ' + p[1].toFixed(1)).join('L') + (close ? 'Z' : '');
}).join('');

const map = document.getElementById('map');
const defs = add(map, 'defs', {});
const world = add(defs, 'g', { id: 'world' });
add(world, 'path', { class: 'land', d: toPath(land, true, 0.34) });
add(world, 'path', { class: 'water', d: toPath(water, true, 0.3) });
add(world, 'path', { class: 'river', d: toPath(rivers, false, 0.3) });
add(world, 'path', { class: 'border', d: toPath(borders.slice(2), false, 0.14) + toPath(borders.slice(0, 2), false) });
[-WORLD, 0, WORLD].forEach(dx => add(map, 'use', { href: '#world', x: dx }));
[-180, -90, 0, 90, 180].forEach(lon => add(map, 'line', { class: 'tile', x1: px(lon), x2: px(lon), y1: 0, y2: 750 }));
[Y0 - WORLD / 4, Y0].forEach(y => add(map, 'line', { class: 'tile', x1: 0, x2: 1850, y1: y, y2: y }));

/* A ground circle is stretched by the projection, so its centre is the middle of its north and south edges. */
cases.forEach(([lat, lon, r = 1.5]) => {
  const s = Math.sin(lat * RAD), c = Math.cos(lat * RAD);
  const span = Math.acos(Math.cos(r * 2 * Math.PI / WORLD) * c * c + s * s) / RAD;
  add(map, 'circle', { class: 'case', cx: (px(lon) - 0.3).toFixed(1), cy: ((py(lat + span) + py(lat - span)) / 2).toFixed(1), r: r + 0.4 });
});

/* Chart: daily new cases, in thousands */
const daily = [485,260,180,340,505,488,478,635,250,222,330,570,592,418,700,270,262,380,732,535,690,765,300,255,530,625,635,808,600,272,300,560,780,685,752,735,300,282,600,710,720,758,600,370,182,520,655,637,672,560,262,320,425,465,580,735,720,360,328,350,400,508,480,440,220,198,215,350,378,325,342,160,113,190,278,294,285,240,130,123,160,240,298,258,240,105,88,140,195,230,260,142,133,78,145,195,240,208,190,90,86,85,180,246,220,140,43,70,125,150,220,190,182,53,56,57,140,182,180];
const labels = ['Nov 11','Nov 19','Nov 27','Dec 5','Dec 13','Dec 21','Dec 29','Jan 6','Jan 14','Jan 22','Jan 30','Feb 7','Feb 15','Feb 23','Mar 3'];
const chart = document.getElementById('chart');
const L = 88, R = 510.5, T = 9, B = 318, step = (R - L) / (daily.length - 1);
const vy = v => B - v * (B - T) / 900;
const pts = daily.map((v, i) => [L + i * step, vy(v)]);
const slope = pts.map((p, i) => {
  if (i === 0 || i === pts.length - 1) return 0;
  const a = (p[1] - pts[i - 1][1]) / step, b = (pts[i + 1][1] - p[1]) / step;
  return a * b <= 0 ? 0 : 2 * a * b / (a + b);
});
let line = `M${pts[0]}`;
for (let i = 1; i < pts.length; i++) {
  const h = step / 3, p = pts[i - 1], q = pts[i];
  line += `C${p[0] + h} ${p[1] + slope[i - 1] * h} ${q[0] - h} ${q[1] - slope[i] * h} ${q[0]} ${q[1]}`;
}
for (let v = 0; v <= 900; v += 100) {
  add(chart, 'line', { class: v ? 'grid' : 'axis', x1: L - 15, x2: R, y1: vy(v), y2: vy(v) });
  add(chart, 'text', { class: 'tick', x: 72.5, y: vy(v) + 6.5 }, v ? v + ',000' : '0');
}
labels.forEach((t, i) => {
  const x = L + i * 8 * step;
  add(chart, 'line', { class: i ? 'grid' : 'axis', x1: x, x2: x, y1: T, y2: i ? B + 13 : B });
  add(chart, 'text', { class: 'tick', x: 0, y: 0, transform: `translate(${x + 3} ${B + 21}) rotate(-50)` }, t);
});
add(chart, 'path', { class: 'area', d: `${line}V${B}H${L}Z` });
add(chart, 'path', { class: 'series', d: line });
```
